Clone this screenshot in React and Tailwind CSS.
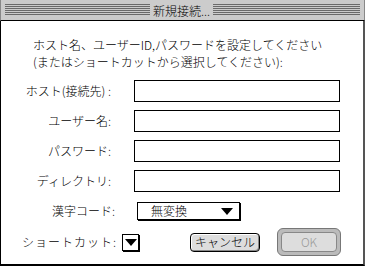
import React from 'react';

const font = { fontFamily: '"Noto Sans CJK JP", "Noto Sans", sans-serif' };

const Stripes = () => (
  <div className="flex flex-col gap-px">
    {[0, 1, 2, 3, 4, 5].map(i => (
      <div key={i} className="h-px bg-[#6b6b6b]" />
    ))}
  </div>
);

const Field = ({ label }) => (
  <div className="flex items-center">
    <div className="w-[112px] text-right pr-[2px]">{label}</div>
    <div className="ml-[21px] w-[206px] h-[22px] border border-black bg-white" />
  </div>
);

const Arrow = () => (
  <svg width="12" height="7" viewBox="0 0 12 7">
    <path d="M0 0H12L6 7Z" fill="#000" />
  </svg>
);

export default function App() {
  return (
    <div className="w-[365px] h-[266px] bg-white flex flex-col text-[12px] font-light text-black leading-none" style={font}>
      <div className="relative h-[21px] bg-[#cccccc] border-b border-black border-l border-l-[#888] border-r border-r-[#888] px-[4px] pt-[4px]">
        <Stripes />
        <div className="absolute left-[149px] top-[2px] h-[17px] px-[3px] bg-[#cccccc] flex items-center">新規接続...</div>
      </div>
      <div className="flex-1 flex flex-col border-l border-black border-r-2 border-r-[#555] border-b-2 border-b-black">
        <div className="pl-[32px] pt-[15px] leading-[17px]">
          <div>ホスト名、ユーザーID,パスワードを設定してください</div>
          <div>(またはショートカットから選択してください):</div>
        </div>
        <div className="mt-[10px] flex flex-col gap-[8px]">
          <Field label="ホスト(接続先) :" />
          <Field label="ユーザー名:" />
          <Field label="パスワード:" />
          <Field label="ディレクトリ:" />
          <div className="flex items-center mt-[2px]">
            <div className="w-[114px] text-right">漢字コード:</div>
            <div className="ml-[22px] w-[103px] h-[18px] border border-black bg-white shadow-[1px_1px_0_#000] flex items-center justify-between pl-[13px] pr-[6px]">
              <span>無変換</span>
              <Arrow />
            </div>
          </div>
        </div>
        <div className="mt-[8px] flex items-center">
          <div className="w-[116px] text-right tracking-[1px]">ショートカット:</div>
          <div className="ml-[5px] w-[17px] h-[17px] border border-black bg-white shadow-[1px_1px_0_#000] flex items-center justify-center">
            <Arrow />
          </div>
          <div className="ml-[51px] w-[70px] h-[19px] rounded-[4px] border border-black bg-[#dddddd] shadow-[inset_-1px_-1px_0_#888,inset_1px_1px_0_#fff] flex items-center justify-center">キャンセル</div>
          <div className="ml-[17px] w-[64px] h-[28px] rounded-[6px] border border-[#777] bg-[#bbbbbb] p-[3px]">
            <div className="w-full h-full rounded-[4px] border border-[#888] bg-[#dddddd] flex items-center justify-center text-[#999]">OK</div>
          </div>
        </div>
      </div>
    </div>
  );
}
